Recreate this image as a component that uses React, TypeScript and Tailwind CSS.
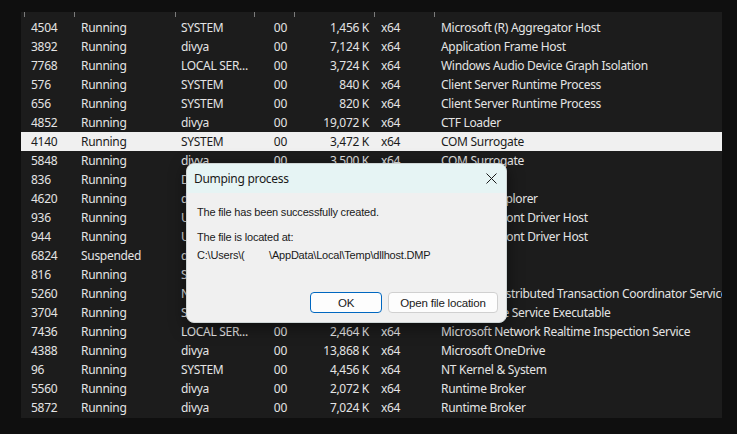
import React from "react";

type Row = [string, string, string, string, string, string, string];

const rows: Row[] = [
  ["4504", "Running", "SYSTEM", "00", "1,456 K", "x64", "Microsoft (R) Aggregator Host"],
  ["3892", "Running", "divya", "00", "7,124 K", "x64", "Application Frame Host"],
  ["7768", "Running", "LOCAL SER...", "00", "3,724 K", "x64", "Windows Audio Device Graph Isolation"],
  ["576", "Running", "SYSTEM", "00", "840 K", "x64", "Client Server Runtime Process"],
  ["656", "Running", "SYSTEM", "00", "820 K", "x64", "Client Server Runtime Process"],
  ["4852", "Running", "divya", "00", "19,072 K", "x64", "CTF Loader"],
  ["4140", "Running", "SYSTEM", "00", "3,472 K", "x64", "COM Surrogate"],
  ["5848", "Running", "divya", "00", "3,500 K", "x64", "COM Surrogate"],
  ["836", "Running", "DWM-1", "00", "28,140 K", "x64", "dwm.exe"],
  ["4620", "Running", "divya", "00", "52,316 K", "x64", "Windows Explorer"],
  ["936", "Running", "UMFD-1", "00", "1,212 K", "x64", "Usermode Font Driver Host"],
  ["944", "Running", "UMFD-0", "00", "1,180 K", "x64", "Usermode Font Driver Host"],
  ["6824", "Suspended", "divya", "00", "0 K", "x64", "Your Phone"],
  ["816", "Running", "SYSTEM", "00", "2,048 K", "x64", "Registry"],
  ["5260", "Running", "NETWORK...", "00", "2,200 K", "x64", "Microsoft Distributed Transaction Coordinator Service"],
  ["3704", "Running", "SYSTEM", "00", "98,412 K", "x64", "Antimalware Service Executable"],
  ["7436", "Running", "LOCAL SER...", "00", "2,464 K", "x64", "Microsoft Network Realtime Inspection Service"],
  ["4388", "Running", "divya", "00", "13,868 K", "x64", "Microsoft OneDrive"],
  ["96", "Running", "SYSTEM", "00", "4,456 K", "x64", "NT Kernel & System"],
  ["5560", "Running", "divya", "00", "2,072 K", "x64", "Runtime Broker"],
  ["5872", "Running", "divya", "00", "7,024 K", "x64", "Runtime Broker"],
];

const cols = "grid grid-cols-[50px_101px_79px_40px_80px_60px_1fr]";

export default function App() {
  return (
    <div
      className="relative w-[737px] h-[434px] overflow-hidden bg-[#0f0f0f] pt-[12px] pl-[21px]"
      style={{ fontFamily: '"Noto Sans", "Open Sans", sans-serif' }}
    >
      <div className="w-[701px] h-[406px] bg-[#1c1c1c] overflow-hidden">
        <div className={`${cols} h-[6px] pl-[3px]`}>
          {[0, 1, 2, 3, 4, 5, 6].map((i) => (
            <div key={i} className="border-l border-[#7a7a7a] h-[5px]" />
          ))}
        </div>
        {rows.map((r, idx) => {
          const sel = idx === 6;
          return (
            <div
              key={idx}
              className={`${cols} h-[19px] pl-[3px] items-center text-[12px] leading-[19px] tracking-[-0.3px] whitespace-nowrap ${
                sel ? "bg-[#f0f0f0] text-[#1b1b1b]" : "text-[#e4e4e4]"
              }`}
            >
              <div className="pl-[7px]">{r[0]}</div>
              <div className="pl-[7px]">{r[1]}</div>
              <div className="pl-[6px] overflow-hidden">{r[2]}</div>
              <div className="pr-[7px] text-right">{r[3]}</div>
              <div className="pr-[5px] text-right">{r[4]}</div>
              <div className="pl-[7px]">{r[5]}</div>
              <div className="pl-[7px] overflow-hidden">{r[6]}</div>
            </div>
          );
        })}
      </div>

      <div className="absolute left-[186px] top-[163px] w-[321px] h-[160px] rounded-[8px] overflow-hidden bg-[#f0f0f0] shadow-[0_4px_16px_rgba(0,0,0,0.5)] border border-[#cfd6d6] flex flex-col">
        <div className="h-[29px] bg-[#e6f4f4] flex items-center justify-between pl-[7px] pr-[9px]">
          <span className="text-[12px] tracking-[-0.3px] text-[#1a1a1a]">Dumping process</span>
          <svg width="11" height="11" viewBox="0 0 11 11">
            <path d="M0.5 0.5 L10.5 10.5 M10.5 0.5 L0.5 10.5" stroke="#1a1a1a" strokeWidth="1" />
          </svg>
        </div>
        <div
          className="flex-1 flex flex-col px-[10px] pt-[12px] text-[11px] leading-[14px] text-[#1a1a1a] tracking-[-0.2px]"
          style={{ fontFamily: '"Liberation Sans", Arial, sans-serif' }}
        >
          <div>The file has been successfully created.</div>
          <div className="mt-[11px]">The file is located at:</div>
          <div className="mt-[4px] whitespace-nowrap">
            C:\Users\<span className="inline-block w-[4px] overflow-hidden align-bottom">(</span>
            <span className="inline-block w-[24px]" />\AppData\Local\Temp\dllhost.DMP
          </div>
          <div className="mt-auto mb-[9px] -mr-[2px] flex justify-end gap-[6px]">
            <button className="w-[72px] h-[21px] rounded-[4px] border border-[#0067c0] bg-[#fdfdfd] text-[11.5px] text-[#1a1a1a] flex items-center justify-center">
              OK
            </button>
            <button className="w-[110px] h-[21px] rounded-[4px] border border-[#d0d0d0] bg-[#fdfdfd] text-[11.5px] text-[#1a1a1a] flex items-center justify-center">
              Open file location
            </button>
          </div>
        </div>
      </div>
    </div>
  );
}
